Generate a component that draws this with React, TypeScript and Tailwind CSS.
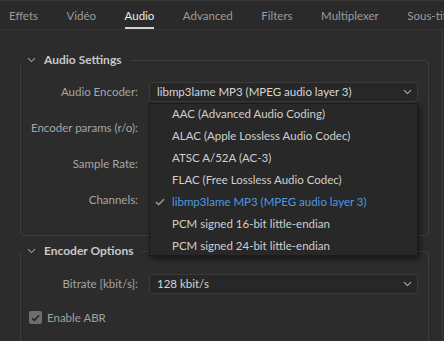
import React from "react";

const font = { fontFamily: "Lato, 'Noto Sans', sans-serif" };

function Chevron({ className = "" }: { className?: string }) {
  return (
    <svg width="9" height="6" viewBox="0 0 9 6" className={className}>
      <path d="M1 1.2 L4.5 4.6 L8 1.2" fill="none" stroke="currentColor" strokeWidth="1.1" />
    </svg>
  );
}

function Select({ value }: { value: string }) {
  return (
    <div className="flex h-[20px] w-[269px] items-center justify-between rounded-[3px] border border-[#3a3a3a] bg-[#272727] pl-[7px] pr-[5px] text-[11.5px] text-[#d6d6d6]">
      <span className="leading-none">{value}</span>
      <Chevron className="text-[#b0b0b0]" />
    </div>
  );
}

function Row({ label, children, h = "h-[36px]" }: { label: string; children?: React.ReactNode; h?: string }) {
  return (
    <div className={`flex ${h} items-center`}>
      <div className="w-[117px] pr-0 text-right text-[11.5px] text-[#a6a6a6]">{label}</div>
      <div className="ml-[11px]">{children}</div>
    </div>
  );
}

function Group({ title, children, className = "" }: { title: string; children: React.ReactNode; className?: string }) {
  return (
    <fieldset className={`rounded-[4px] border border-[#3d3d3d] ${className}`}>
      <legend className="flex h-[16px] items-center pl-[6px] pr-[8px]">
        <Chevron className="text-[#9a9a9a]" />
        <span className="ml-[8px] text-[12px] font-bold text-[#c9c9c9]">{title}</span>
      </legend>
      {children}
    </fieldset>
  );
}

const tabs = ["Effets", "Vidéo", "Audio", "Advanced", "Filters", "Multiplexer", "Sous-titres"];

const items = [
  "AAC (Advanced Audio Coding)",
  "ALAC (Apple Lossless Audio Codec)",
  "ATSC A/52A (AC-3)",
  "FLAC (Free Lossless Audio Codec)",
  "libmp3lame MP3 (MPEG audio layer 3)",
  "PCM signed 16-bit little-endian",
  "PCM signed 24-bit little-endian",
];

export default function App() {
  return (
    <div style={font} className="relative h-[341px] w-[444px] overflow-hidden bg-[#2c2c2c]">
      <div className="flex h-[30px] items-stretch gap-[28.5px] overflow-hidden whitespace-nowrap border-b border-t border-[#383838] bg-[#2a2a2a] pl-[9px] text-[11.5px]">
        {tabs.map((t) => (
          <div
            key={t}
            className={`flex shrink-0 items-center border-b-2 pt-[3px] ${
              t === "Audio" ? "border-[#d0d0d0] text-[#ececec]" : "border-transparent text-[#9c9c9c]"
            }`}
          >
            {t}
          </div>
        ))}
      </div>
      <div className="flex h-[311px]">
        <div className="w-[442px] pl-[20px] pr-[13px] pt-[22px]">
          <Group title="Audio Settings" className="pb-[17px] pt-[6px]">
            <Row label="Audio Encoder:">
              <Select value="libmp3lame MP3 (MPEG audio layer 3)" />
            </Row>
            <Row label="Encoder params (r/o):" />
            <Row label="Sample Rate:" />
            <Row label="Channels:" />
          </Group>
          <Group title="Encoder Options" className="mt-[7px] pt-[7px] pb-[20px]">
            <Row label="Bitrate [kbit/s]:">
              <Select value="128 kbit/s" />
            </Row>
            <div className="flex h-[30px] items-center pl-[8px] pt-[1px]">
              <div className="flex h-[13px] w-[13px] items-center justify-center rounded-[2px] bg-[#6e6e6e]">
                <svg width="9" height="8" viewBox="0 0 9 8">
                  <path d="M1 4.2 L3.4 6.4 L8 1.4" fill="none" stroke="#2a2a2a" strokeWidth="1.6" />
                </svg>
              </div>
              <span className="ml-[5px] text-[11.5px] text-[#a0a0a0]">Enable ABR</span>
            </div>
          </Group>
        </div>
        <div className="w-[2px] border-l border-[#3a3a3a]" />
      </div>

      <div className="absolute left-[149px] top-[103px] h-[153px] w-[269px] overflow-hidden border border-[#1c1c1c] bg-[#282828] shadow-[2px_3px_6px_rgba(0,0,0,0.5)]">
        {items.map((it) => {
          const sel = it.startsWith("libmp3lame");
          return (
            <div key={it} className="relative flex h-[22px] items-center pb-[2px] pl-[22px] text-[11.5px]">
              {sel && (
                <svg width="10" height="8" viewBox="0 0 10 8" className="absolute left-[5px] top-[6px]">
                  <path d="M1 4 L3.6 6.6 L9 1.2" fill="none" stroke="#a8a8a8" strokeWidth="1.3" />
                </svg>
              )}
              <span className={sel ? "text-[#4a9ae4]" : "text-[#cfcfcf]"}>{it}</span>
            </div>
          );
        })}
      </div>
    </div>
  );
}
